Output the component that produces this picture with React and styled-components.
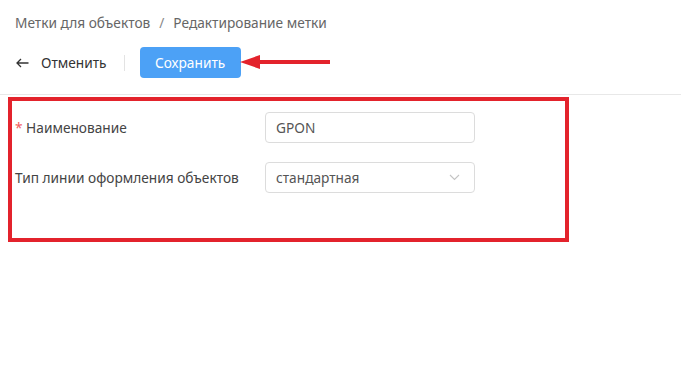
import styled, { createGlobalStyle } from "styled-components";

const GlobalStyle = createGlobalStyle`
  body {
    margin: 0;
    background: #fff;
    font-family: "Noto Sans", "Open Sans", sans-serif;
    color: #444;
  }
`;

export default function App() {
  return (
    <>
      <GlobalStyle />
      <Header>
        <Breadcrumbs>
          <Crumb>Метки для объектов</Crumb>
          <Slash>/</Slash>
          <Crumb>Редактирование метки</Crumb>
        </Breadcrumbs>
        <Toolbar>
          <BackLink>
            <svg width="13" height="10" viewBox="0 0 13 10" fill="none">
              <path d="M12.5 5H1M5 1L1 5l4 4" stroke="#333" strokeWidth="1.3" />
            </svg>
            Отменить
          </BackLink>
          <Divider />
          <SaveButton>Сохранить</SaveButton>
          <Pointer width="92" height="18" viewBox="0 0 92 18">
            <path d="M0 9L20 2v5h70v4H20v5z" fill="#e3232c" />
          </Pointer>
        </Toolbar>
      </Header>
      <Highlight>
        <Row>
          <Label><Req>*</Req> Наименование</Label>
          <Field>GPON</Field>
        </Row>
        <Row>
          <Label>Тип линии оформления объектов</Label>
          <Field>
            стандартная
            <svg width="11" height="7" viewBox="0 0 11 7" fill="none">
              <path d="M1 1l4.5 4.5L10 1" stroke="#c4c4c4" strokeWidth="1.1" />
            </svg>
          </Field>
        </Row>
      </Highlight>
    </>
  );
}

const Header = styled.div`
  border-bottom: 1px solid #e8e8e8;
  height: 95px;
  box-sizing: border-box;
  padding: 12px 15px 0;
`;

const Breadcrumbs = styled.div`
  display: flex;
  align-items: center;
  font-size: 13.7px;
  line-height: 22px;
  color: #666;
`;

const Crumb = styled.span``;

const Slash = styled.span`
  margin: 0 9px;
  color: #888;
`;

const Toolbar = styled.div`
  position: relative;
  display: flex;
  align-items: center;
  margin-top: 13px;
  height: 31px;
`;

const BackLink = styled.div`
  display: flex;
  align-items: center;
  gap: 12px;
  padding-left: 1px;
  font-size: 13.7px;
  color: #333;
`;

const Divider = styled.div`
  width: 1px;
  height: 16px;
  background: #e3e3e3;
  margin: 0 15px 0 17px;
`;

const SaveButton = styled.button`
  width: 101px;
  height: 31px;
  border: none;
  border-radius: 4px;
  background: #4ca1f6;
  color: #fff;
  font-family: inherit;
  font-size: 13.7px;
  padding: 0;
`;

const Pointer = styled.svg`
  position: absolute;
  left: 225px;
  top: 6px;
`;

const Highlight = styled.div`
  margin: 2px 0 0 8px;
  width: 561px;
  height: 145px;
  box-sizing: border-box;
  border: 4px solid #e3232c;
  padding: 11px 0 0 3px;
  display: flex;
  flex-direction: column;
  gap: 19px;
`;

const Row = styled.div`
  display: flex;
  align-items: center;
`;

const Label = styled.div`
  width: 250px;
  font-size: 13.7px;
  color: #444;
`;

const Req = styled.span`
  color: #f25c5c;
`;

const Field = styled.div`
  width: 210px;
  height: 31px;
  box-sizing: border-box;
  border: 1px solid #dcdcdc;
  border-radius: 4px;
  padding: 0 14px 0 10px;
  display: flex;
  align-items: center;
  justify-content: space-between;
  font-size: 13.7px;
  color: #555;
`;
